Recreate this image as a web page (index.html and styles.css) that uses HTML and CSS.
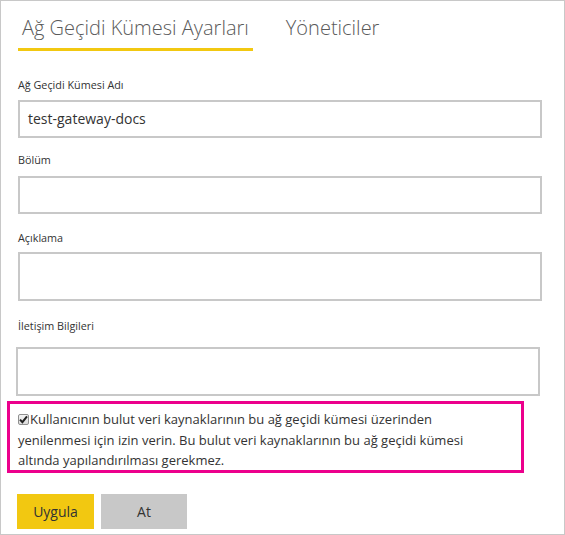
FILE: index.html
```html
<!DOCTYPE html>
<html lang="tr">
<head>
<meta charset="utf-8">
<link rel="stylesheet" href="styles.css">
</head>
<body>
<div class="panel">
  <div class="tabs">
    <div class="tab tab-active">Ağ Geçidi Kümesi Ayarları</div>
    <div class="tab">Yöneticiler</div>
  </div>
  <div class="label label-first">Ağ Geçidi Kümesi Adı</div>
  <div class="field field-short"><span class="value">test-gateway-docs</span></div>
  <div class="label label-2">Bölüm</div>
  <div class="field field-short field-2"></div>
  <div class="label label-3">Açıklama</div>
  <div class="field field-tall field-3"></div>
  <div class="label label-4">İletişim Bilgileri</div>
  <div class="field field-tall field-4"></div>
  <div class="notice">
    <span class="check"><svg width="9" height="9" viewBox="0 0 9 9"><path d="M1 4.6 L3.4 7.2 L8 1.4" fill="none" stroke="#222" stroke-width="2"/></svg></span>Kullanıcının bulut veri kaynaklarının bu ağ geçidi kümesi üzerinden<br>yenilenmesi için izin verin. Bu bulut veri kaynaklarının bu ağ geçidi kümesi<br>altında yapılandırılması gerekmez.
  </div>
  <div class="buttons">
    <div class="btn btn-primary">Uygula</div>
    <div class="btn btn-secondary">At</div>
  </div>
</div>
</body>
</html>
```
FILE: styles.css
```css
html, body {
  margin: 0;
  padding: 0;
  background: #fff;
}
body {
  font-family: "Open Sans", "Noto Sans", sans-serif;
  color: #333;
}
.panel {
  box-sizing: border-box;
  width: 565px;
  height: 535px;
  border: 1px solid #c8c8c8;
  padding-left: 17px;
  overflow: hidden;
}
.tabs {
  display: flex;
  gap: 29px;
}
.tab {
  font-size: 20px;
  font-weight: 300;
  line-height: 28px;
  color: #5a5a5a;
  padding: 13px 4px 6px;
  border-bottom: 3px solid transparent;
}
.tab-active {
  border-bottom-color: #f2c811;
}
.label {
  font-size: 10.8px;
  line-height: 16px;
  color: #333;
}
.label-first { margin-top: 26px; }
.label-2 { margin-top: 14px; }
.label-3 { margin-top: 16px; }
.label-4 { margin-top: 17px; }
.field {
  box-sizing: border-box;
  width: 524px;
  border: 2px solid #c8c8c8;
  margin-top: 7px;
}
.field-short { height: 38px; }
.field-2 { margin-top: 8px; }
.field-tall { height: 49px; }
.field-3 { margin-top: 6px; }
.field-4 {
  margin-top: 13px;
  margin-left: -2px;
}
.value {
  display: block;
  font-size: 14px;
  line-height: 34px;
  padding-left: 8px;
  color: #333;
}
.notice {
  box-sizing: border-box;
  width: 517px;
  height: 72px;
  margin: 5px 0 0 -11px;
  border: 3px solid #ec008c;
  padding: 5px 8px 0 8px;
  font-size: 13px;
  line-height: 20.5px;
  color: #333;
  white-space: nowrap;
}
.check {
  display: inline-block;
  box-sizing: border-box;
  width: 11px;
  height: 11px;
  border: 1px solid #8f8f8f;
  border-radius: 2px;
  background: linear-gradient(#f4f4f4, #dcdcdc);
  vertical-align: -1px;
  margin-right: 1px;
  position: relative;
}
.check svg {
  position: absolute;
  left: 0;
  top: 0;
}
.buttons {
  display: flex;
  gap: 7px;
  margin: 21px 0 0 -1px;
}
.btn {
  height: 35px;
  line-height: 35px;
  font-size: 14px;
  text-align: center;
  color: #333;
}
.btn-primary {
  width: 77px;
  background: #f2c811;
}
.btn-secondary {
  width: 86px;
  background: #c8c8c8;
}
```
